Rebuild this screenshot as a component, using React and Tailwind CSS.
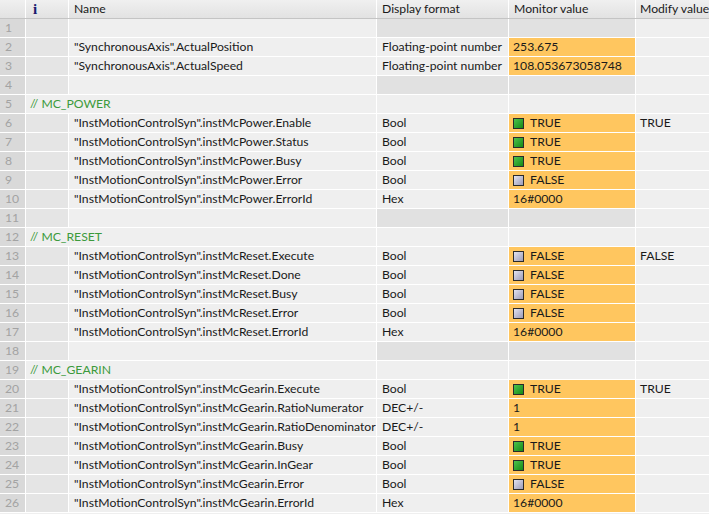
import React from 'react'

const P = '"InstMotionControlSyn".instMcPower.'
const R = '"InstMotionControlSyn".instMcReset.'
const G = '"InstMotionControlSyn".instMcGearin.'

const rows = [
  { empty: true },
  { name: '"SynchronousAxis".ActualPosition', fmt: 'Floating-point number', mon: '253.675' },
  { name: '"SynchronousAxis".ActualSpeed', fmt: 'Floating-point number', mon: '108.053673058748' },
  { empty: true },
  { comment: '// MC_POWER' },
  { name: P + 'Enable', fmt: 'Bool', mon: 'TRUE', bool: true, mod: 'TRUE' },
  { name: P + 'Status', fmt: 'Bool', mon: 'TRUE', bool: true },
  { name: P + 'Busy', fmt: 'Bool', mon: 'TRUE', bool: true },
  { name: P + 'Error', fmt: 'Bool', mon: 'FALSE', bool: true },
  { name: P + 'ErrorId', fmt: 'Hex', mon: '16#0000' },
  { empty: true },
  { comment: '// MC_RESET' },
  { name: R + 'Execute', fmt: 'Bool', mon: 'FALSE', bool: true, mod: 'FALSE' },
  { name: R + 'Done', fmt: 'Bool', mon: 'FALSE', bool: true },
  { name: R + 'Busy', fmt: 'Bool', mon: 'FALSE', bool: true },
  { name: R + 'Error', fmt: 'Bool', mon: 'FALSE', bool: true },
  { name: R + 'ErrorId', fmt: 'Hex', mon: '16#0000' },
  { empty: true },
  { comment: '// MC_GEARIN' },
  { name: G + 'Execute', fmt: 'Bool', mon: 'TRUE', bool: true, mod: 'TRUE' },
  { name: G + 'RatioNumerator', fmt: 'DEC+/-', mon: '1' },
  { name: G + 'RatioDenominator', fmt: 'DEC+/-', mon: '1' },
  { name: G + 'Busy', fmt: 'Bool', mon: 'TRUE', bool: true },
  { name: G + 'InGear', fmt: 'Bool', mon: 'TRUE', bool: true },
  { name: G + 'Error', fmt: 'Bool', mon: 'FALSE', bool: true },
  { name: G + 'ErrorId', fmt: 'Hex', mon: '16#0000' },
]

function BoolBox({ on }) {
  return (
    <span
      className={`inline-block w-[11px] h-[11px] mr-[6px] border border-[#2a2a2a] ${
        on ? 'bg-gradient-to-br from-[#4cc34c] to-[#128a12]' : 'bg-gradient-to-br from-[#e4e4f0] to-[#9c9cb8]'
      }`}
    />
  )
}

function Row({ r, n }) {
  const cell = 'h-full flex items-center border-r border-white shrink-0 whitespace-nowrap overflow-hidden'
  return (
    <div className="flex h-[19px] border-b border-white">
      <div className={`${cell} w-[26px] bg-[#d9d9d9] pl-[5px] text-[#a3a3a3]`}>{n}</div>
      {r.comment ? (
        <div className={`${cell} w-[351px] bg-[#efefef] pl-[4px] text-[#3c9a3c]`}>{r.comment}</div>
      ) : (
        <>
          <div className={`${cell} w-[43px] bg-[#e5e5e5]`} />
          <div className={`${cell} w-[308px] bg-[#efefef] pl-[5px] text-[#1a1a1a]`}>{r.name}</div>
        </>
      )}
      <div className={`${cell} w-[132px] pl-[5px] text-[#1a1a1a] ${r.empty ? 'bg-[#e1e1e1]' : 'bg-[#efefef]'}`}>
        {r.fmt}
      </div>
      <div
        className={`${cell} w-[127px] pl-[4px] text-[#1a1a1a] ${
          r.empty ? 'bg-[#e1e1e1]' : r.mon ? 'bg-[#ffc65f]' : 'bg-[#efefef]'
        }`}
      >
        {r.bool && <BoolBox on={r.mon === 'TRUE'} />}
        {r.mon}
      </div>
      <div className="h-full flex items-center flex-1 bg-[#efefef] pl-[4px] text-[#1a1a1a] whitespace-nowrap">{r.mod}</div>
    </div>
  )
}

export default function App() {
  const head = 'h-full flex items-center border-r border-white shrink-0 pl-[5px] whitespace-nowrap'
  return (
    <div
      className="w-[709px] h-[514px] bg-[#efefef] overflow-hidden text-[12.2px] leading-none"
      style={{ fontFamily: 'Lato, "Noto Sans", sans-serif' }}
    >
      <div className="flex h-[19px] bg-gradient-to-b from-[#f0f0f0] to-[#e2e2e2] border-b border-[#c4c4c4] text-[#1a1a1a]">
        <div className={`${head} w-[26px]`} />
        <div className={`${head} w-[43px] pl-[7px]`}>
          <span className="font-bold text-[#1b1b6e] text-[15px]" style={{ fontFamily: '"Liberation Serif", serif' }}>
            i
          </span>
        </div>
        <div className={`${head} w-[308px]`}>Name</div>
        <div className={`${head} w-[132px]`}>Display format</div>
        <div className={`${head} w-[127px]`}>Monitor value</div>
        <div className="h-full flex items-center flex-1 pl-[4px] whitespace-nowrap">Modify value</div>
      </div>
      {rows.map((r, i) => (
        <Row key={i} r={r} n={i + 1} />
      ))}
    </div>
  )
}
